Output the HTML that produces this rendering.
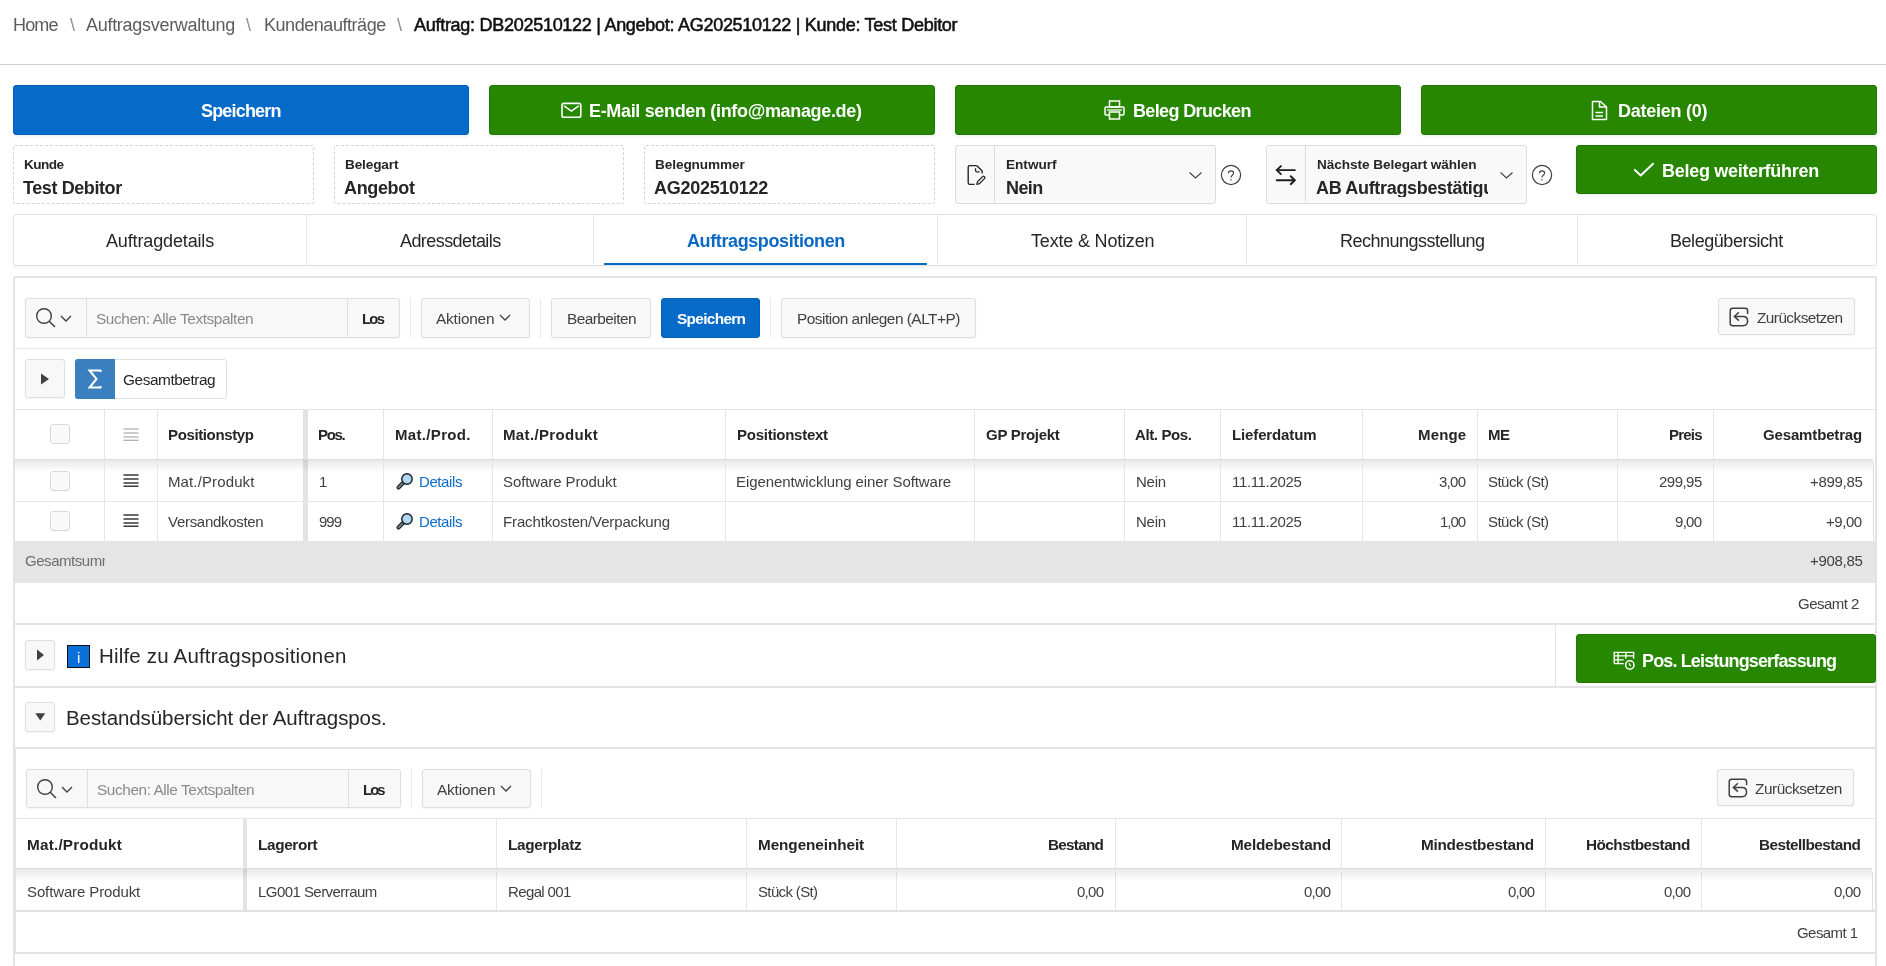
<!DOCTYPE html><html><head><meta charset="utf-8"><style>
html,body{margin:0;padding:0;background:#fff;}
body{width:1886px;height:966px;overflow:hidden;position:relative;font-family:"Liberation Sans",sans-serif;}
.t{position:absolute;white-space:nowrap;will-change:transform;}
.r{position:absolute;box-sizing:border-box;}
svg.r{overflow:visible;}
</style></head><body>
<div class="r" style="left:0px;top:64px;width:1886px;height:1px;background:#cfcfcf;"></div>
<div class="t" style="left:13.10px;top:16.00px;font-size:18.0px;line-height:18.0px;color:#5c5c5c;letter-spacing:-0.833px;">Home</div>
<div class="t" style="left:69.80px;top:16.00px;font-size:18.0px;line-height:18.0px;color:#8f8f8f;letter-spacing:0.000px;">\</div>
<div class="t" style="left:86.10px;top:16.00px;font-size:18.0px;line-height:18.0px;color:#5c5c5c;letter-spacing:-0.288px;">Auftragsverwaltung</div>
<div class="t" style="left:245.60px;top:16.00px;font-size:18.0px;line-height:18.0px;color:#8f8f8f;letter-spacing:0.000px;">\</div>
<div class="t" style="left:264.40px;top:16.00px;font-size:18.0px;line-height:18.0px;color:#5c5c5c;letter-spacing:-0.454px;">Kundenaufträge</div>
<div class="t" style="left:397.00px;top:16.00px;font-size:18.0px;line-height:18.0px;color:#8f8f8f;letter-spacing:0.000px;">\</div>
<div class="t" style="left:414.00px;top:16.00px;font-size:18.0px;line-height:18.0px;color:#111111;letter-spacing:-0.279px;-webkit-text-stroke:0.55px #111111;">Auftrag: DB202510122 | Angebot: AG202510122 | Kunde: Test Debitor</div>
<div class="r" style="left:13px;top:85px;width:456px;height:50px;background:#056ac8;border:1px solid #0460b8;border-radius:3px;box-shadow:0 2px 3px rgba(0,0,0,0.06);"></div>
<div class="t" style="left:200.80px;top:102.00px;font-size:18.0px;line-height:18.0px;color:#fff;letter-spacing:-0.819px;font-weight:bold;">Speichern</div>
<div class="r" style="left:489px;top:85px;width:446px;height:50px;background:#278701;border:1px solid #217a00;border-radius:3px;box-shadow:0 2px 3px rgba(0,0,0,0.06);"></div>
<svg class="r" style="left:561px;top:103px;" width="21" height="15" viewBox="0 0 21 15"><rect x="1" y="0.4" width="18.8" height="13.8" rx="1.8" fill="none" stroke="#fff" stroke-width="1.6"/><path d="M3 2.8 L10.4 8 L17.8 2.8" fill="none" stroke="#fff" stroke-width="1.5"/></svg>
<div class="t" style="left:589.40px;top:102.00px;font-size:18.0px;line-height:18.0px;color:#fff;letter-spacing:-0.334px;font-weight:bold;">E-Mail senden (info@manage.de)</div>
<div class="r" style="left:955px;top:85px;width:446px;height:50px;background:#278701;border:1px solid #217a00;border-radius:3px;box-shadow:0 2px 3px rgba(0,0,0,0.06);"></div>
<svg class="r" style="left:1104px;top:100px;" width="21" height="20" viewBox="0 0 21 20"><rect x="5.5" y="1" width="10" height="6" fill="none" stroke="#fff" stroke-width="1.5"/><path d="M5 15 H2 Q1 15 1 14 V8 Q1 7 2 7 H19 Q20 7 20 8 V14 Q20 15 19 15 H16" fill="none" stroke="#fff" stroke-width="1.5"/><rect x="5.5" y="12" width="10" height="7" fill="none" stroke="#fff" stroke-width="1.5"/><path d="M3 10 H18" stroke="#fff" stroke-width="1.3"/></svg>
<div class="t" style="left:1132.90px;top:102.00px;font-size:18.0px;line-height:18.0px;color:#fff;letter-spacing:-0.638px;font-weight:bold;">Beleg Drucken</div>
<div class="r" style="left:1421px;top:85px;width:456px;height:50px;background:#278701;border:1px solid #217a00;border-radius:3px;box-shadow:0 2px 3px rgba(0,0,0,0.06);"></div>
<svg class="r" style="left:1591px;top:100px;" width="17" height="21" viewBox="0 0 17 21"><path d="M1.5 1.5 H9.5 L15.5 7 V19.5 H1.5 Z" fill="none" stroke="#fff" stroke-width="1.5" stroke-linejoin="round"/><path d="M8.5 2 V7 H15" fill="none" stroke="#fff" stroke-width="1.5"/><path d="M4.5 12.5 H12 M4.5 16 H12" stroke="#fff" stroke-width="1.5"/></svg>
<div class="t" style="left:1618.20px;top:102.00px;font-size:18.0px;line-height:18.0px;color:#fff;letter-spacing:-0.250px;font-weight:bold;">Dateien (0)</div>
<div class="r" style="left:13px;top:145px;width:301px;height:59px;border:1px dashed #d2d2d2;border-radius:2px;"></div>
<div class="t" style="left:23.90px;top:158.00px;font-size:13.6px;line-height:13.6px;color:#262626;letter-spacing:-0.550px;font-weight:bold;">Kunde</div>
<div class="t" style="left:23.30px;top:179.00px;font-size:18.0px;line-height:18.0px;color:#262626;letter-spacing:-0.409px;font-weight:bold;">Test Debitor</div>
<div class="r" style="left:334px;top:145px;width:290px;height:59px;border:1px dashed #d2d2d2;border-radius:2px;"></div>
<div class="t" style="left:344.50px;top:158.00px;font-size:13.6px;line-height:13.6px;color:#262626;letter-spacing:-0.129px;font-weight:bold;">Belegart</div>
<div class="t" style="left:343.90px;top:179.00px;font-size:18.0px;line-height:18.0px;color:#262626;letter-spacing:-0.350px;font-weight:bold;">Angebot</div>
<div class="r" style="left:644px;top:145px;width:291px;height:59px;border:1px dashed #d2d2d2;border-radius:2px;"></div>
<div class="t" style="left:655.00px;top:158.00px;font-size:13.6px;line-height:13.6px;color:#262626;letter-spacing:-0.080px;font-weight:bold;">Belegnummer</div>
<div class="t" style="left:654.30px;top:179.00px;font-size:18.0px;line-height:18.0px;color:#262626;letter-spacing:-0.280px;font-weight:bold;">AG202510122</div>
<div class="r" style="left:955px;top:145px;width:261px;height:59px;background:#f9f9f9;border:1px solid #dcdcdc;border-radius:3px;"></div>
<div class="r" style="left:994px;top:146px;width:1px;height:57px;background:#dcdcdc;"></div>
<svg class="r" style="left:960px;top:160px;" width="32" height="30" viewBox="0 0 32 30"><path d="M16.6 5.6 H9.8 Q8.2 5.6 8.2 7.2 V22.8 Q8.2 24.4 9.8 24.4 H14.6" fill="none" stroke="#262626" stroke-width="1.4"/><path d="M16.6 5.6 L22.2 10.9 V13.4" fill="none" stroke="#262626" stroke-width="1.4" stroke-linejoin="round"/><path d="M15.5 8.2 V10.3 Q15.5 11.9 17.1 11.9 H19.6" fill="none" stroke="#262626" stroke-width="1.3"/><path d="M16.8 24.4 L17.56 21.65 L22.5 16.6 A1.4 1.4 0 0 1 24.5 18.6 L19.54 23.61 Z" fill="#e8e8e8" stroke="#262626" stroke-width="1.3" stroke-linejoin="round"/></svg>
<div class="t" style="left:1005.90px;top:158.00px;font-size:13.6px;line-height:13.6px;color:#262626;letter-spacing:-0.000px;font-weight:bold;">Entwurf</div>
<div class="t" style="left:1005.90px;top:179.00px;font-size:18.0px;line-height:18.0px;color:#262626;letter-spacing:-0.600px;font-weight:bold;">Nein</div>
<svg class="r" style="left:1189px;top:172px;" width="13" height="7" viewBox="0 0 13 7"><path d="M0.5 0.5 L6.5 6 L12.5 0.5" fill="none" stroke="#404040" stroke-width="1.1"/></svg>
<svg class="r" style="left:1220px;top:164px;" width="22" height="22" viewBox="0 0 22 22"><circle cx="11" cy="11" r="9.6" fill="none" stroke="#404040" stroke-width="1.2"/><path d="M8.4 9.3 Q8.4 6.8 11 6.8 Q13.6 6.8 13.6 9.1 Q13.6 10.6 12.1 11.4 Q11 12 11 13.6" fill="none" stroke="#404040" stroke-width="1.15"/><circle cx="11" cy="15.8" r="0.75" fill="#404040"/></svg>
<div class="r" style="left:1266px;top:145px;width:261px;height:59px;background:#f9f9f9;border:1px solid #dcdcdc;border-radius:3px;"></div>
<div class="r" style="left:1305px;top:146px;width:1px;height:57px;background:#dcdcdc;"></div>
<svg class="r" style="left:1270px;top:160px;" width="32" height="30" viewBox="0 0 32 30"><path d="M6.7 10.1 H24.9 M10.9 6.1 L6.7 10.1 L10.9 14.1 M24.9 20.2 H6.7 M20.7 16.2 L24.9 20.2 L20.7 24.2" fill="none" stroke="#1e1e1e" stroke-width="1.9" stroke-linecap="round" stroke-linejoin="round"/></svg>
<div class="t" style="left:1316.60px;top:158.00px;font-size:13.6px;line-height:13.6px;color:#262626;letter-spacing:-0.059px;font-weight:bold;">Nächste Belegart wählen</div>
<div class="t" style="left:1316.00px;top:179.00px;font-size:18.0px;line-height:18.0px;color:#262626;letter-spacing:-0.325px;font-weight:bold;width:171.50px;overflow:hidden;">AB Auftragsbestätigung</div>
<svg class="r" style="left:1500px;top:172px;" width="13" height="7" viewBox="0 0 13 7"><path d="M0.5 0.5 L6.5 6 L12.5 0.5" fill="none" stroke="#404040" stroke-width="1.1"/></svg>
<svg class="r" style="left:1530.5px;top:164px;" width="22" height="22" viewBox="0 0 22 22"><circle cx="11" cy="11" r="9.6" fill="none" stroke="#404040" stroke-width="1.2"/><path d="M8.4 9.3 Q8.4 6.8 11 6.8 Q13.6 6.8 13.6 9.1 Q13.6 10.6 12.1 11.4 Q11 12 11 13.6" fill="none" stroke="#404040" stroke-width="1.15"/><circle cx="11" cy="15.8" r="0.75" fill="#404040"/></svg>
<div class="r" style="left:1576px;top:145px;width:301px;height:49px;background:#278701;border:1px solid #217a00;border-radius:3px;box-shadow:0 2px 3px rgba(0,0,0,0.06);"></div>
<svg class="r" style="left:1626px;top:155px;" width="34" height="26" viewBox="0 0 34 26"><path d="M8.85 14.9 L14.75 20.5 L27 8.7" fill="none" stroke="#fff" stroke-width="2" stroke-linecap="round" stroke-linejoin="round"/></svg>
<div class="t" style="left:1661.60px;top:162.00px;font-size:18.0px;line-height:18.0px;color:#fff;letter-spacing:-0.285px;font-weight:bold;">Beleg weiterführen</div>
<div class="r" style="left:13px;top:214px;width:1864px;height:52px;background:#fff;border:1px solid #e2e2e2;border-radius:3px;box-shadow:0 2px 3px rgba(0,0,0,0.04);"></div>
<div class="r" style="left:306px;top:215px;width:1px;height:50px;background:#e6e6e6;"></div>
<div class="r" style="left:593px;top:215px;width:1px;height:50px;background:#e6e6e6;"></div>
<div class="r" style="left:937px;top:215px;width:1px;height:50px;background:#e6e6e6;"></div>
<div class="r" style="left:1246px;top:215px;width:1px;height:50px;background:#e6e6e6;"></div>
<div class="r" style="left:1577px;top:215px;width:1px;height:50px;background:#e6e6e6;"></div>
<div class="t" style="left:106.00px;top:232.00px;font-size:18.0px;line-height:18.0px;color:#262626;letter-spacing:-0.142px;">Auftragdetails</div>
<div class="t" style="left:399.80px;top:232.00px;font-size:18.0px;line-height:18.0px;color:#262626;letter-spacing:-0.571px;">Adressdetails</div>
<div class="t" style="left:686.90px;top:232.00px;font-size:18.0px;line-height:18.0px;color:#0b68c4;letter-spacing:-0.394px;font-weight:bold;">Auftragspositionen</div>
<div class="t" style="left:1030.50px;top:232.00px;font-size:18.0px;line-height:18.0px;color:#262626;letter-spacing:-0.182px;">Texte &amp; Notizen</div>
<div class="t" style="left:1339.60px;top:232.00px;font-size:18.0px;line-height:18.0px;color:#262626;letter-spacing:-0.500px;">Rechnungsstellung</div>
<div class="t" style="left:1670.30px;top:232.00px;font-size:18.0px;line-height:18.0px;color:#262626;letter-spacing:-0.454px;">Belegübersicht</div>
<div class="r" style="left:604px;top:263px;width:323px;height:2px;background:#056ac8;"></div>
<div class="r" style="left:13px;top:276px;width:1864px;height:724px;background:#fff;border:2px solid #e3e3e3;border-radius:3px;"></div>
<div class="r" style="left:13px;top:276px;width:1864px;height:349px;border:2px solid #e3e3e3;border-radius:3px;"></div>
<div class="r" style="left:25px;top:298px;width:375px;height:40px;background:#f8f8f8;border:1px solid #dedede;border-radius:3px;box-shadow:0 1px 2px rgba(0,0,0,0.05);"></div>
<div class="r" style="left:86px;top:299px;width:1px;height:38px;background:#dedede;"></div>
<div class="r" style="left:347px;top:299px;width:1px;height:38px;background:#dedede;"></div>
<svg class="r" style="left:35px;top:308px;" width="24" height="22" viewBox="0 0 24 22"><circle cx="9" cy="8" r="7.3" fill="none" stroke="#404040" stroke-width="1.4"/><path d="M14.2 13.2 L20 19" stroke="#404040" stroke-width="1.5"/></svg>
<svg class="r" style="left:60px;top:315px;" width="13" height="8" viewBox="0 0 13 8"><path d="M1 1 L6 6 L11 1" fill="none" stroke="#404040" stroke-width="1.4"/></svg>
<div class="t" style="left:95.80px;top:311.00px;font-size:15.4px;line-height:15.4px;color:#8a8a8a;letter-spacing:-0.426px;">Suchen: Alle Textspalten</div>
<div class="t" style="left:362.30px;top:312.00px;font-size:14.8px;line-height:14.8px;color:#262626;letter-spacing:-1.700px;font-weight:bold;">Los</div>
<div class="r" style="left:410px;top:298px;width:1px;height:40px;background:#e8e8e8;"></div>
<div class="r" style="left:421px;top:298px;width:109px;height:40px;background:#f8f8f8;border:1px solid #dedede;border-radius:3px;box-shadow:0 1px 2px rgba(0,0,0,0.05);"></div>
<div class="t" style="left:436.40px;top:311.00px;font-size:15.4px;line-height:15.4px;color:#404040;letter-spacing:-0.193px;">Aktionen</div>
<svg class="r" style="left:498.5px;top:314px;" width="13" height="8" viewBox="0 0 13 8"><path d="M1 1 L6 6 L11 1" fill="none" stroke="#404040" stroke-width="1.3"/></svg>
<div class="r" style="left:540px;top:298px;width:1px;height:40px;background:#e8e8e8;"></div>
<div class="r" style="left:551px;top:298px;width:100px;height:40px;background:#f8f8f8;border:1px solid #dedede;border-radius:3px;box-shadow:0 1px 2px rgba(0,0,0,0.05);"></div>
<div class="t" style="left:566.50px;top:311.00px;font-size:15.4px;line-height:15.4px;color:#404040;letter-spacing:-0.544px;">Bearbeiten</div>
<div class="r" style="left:661px;top:298px;width:99px;height:40px;background:#056ac8;border:1px solid #0460b8;border-radius:3px;"></div>
<div class="t" style="left:676.50px;top:311.00px;font-size:15.4px;line-height:15.4px;color:#fff;letter-spacing:-0.681px;font-weight:bold;">Speichern</div>
<div class="r" style="left:770px;top:298px;width:1px;height:40px;background:#e8e8e8;"></div>
<div class="r" style="left:781px;top:298px;width:195px;height:40px;background:#f8f8f8;border:1px solid #dedede;border-radius:3px;box-shadow:0 1px 2px rgba(0,0,0,0.05);"></div>
<div class="t" style="left:796.90px;top:311.00px;font-size:15.4px;line-height:15.4px;color:#404040;letter-spacing:-0.491px;">Position anlegen (ALT+P)</div>
<div class="r" style="left:1718px;top:298px;width:137px;height:37px;background:#f8f8f8;border:1px solid #dedede;border-radius:3px;box-shadow:0 1px 2px rgba(0,0,0,0.05);"></div>
<svg class="r" style="left:1729px;top:307px;" width="20" height="20" viewBox="0 0 20 20"><path d="M18.6 6.9 V3.8 Q18.6 1.3 16.1 1.3 H3.7 Q1.2 1.3 1.2 3.8 V16.2 Q1.2 18.7 3.7 18.7 H14 Q18.6 18.7 18.6 14 Q18.6 9.4 14 9.4 H5.2" fill="none" stroke="#404040" stroke-width="1.5"/><path d="M9.9 5.2 L5.4 9.4 L9.9 13.6" fill="none" stroke="#404040" stroke-width="1.5"/></svg>
<div class="t" style="left:1757.00px;top:310.00px;font-size:15.4px;line-height:15.4px;color:#404040;letter-spacing:-0.568px;">Zurücksetzen</div>
<div class="r" style="left:15px;top:348px;width:1860px;height:1px;background:#e6e6e6;"></div>
<div class="r" style="left:25px;top:359px;width:40px;height:39px;background:#f8f8f8;border:1px solid #dedede;border-radius:3px;box-shadow:0 1px 2px rgba(0,0,0,0.05);"></div>
<svg class="r" style="left:40px;top:373px;" width="10" height="12" viewBox="0 0 10 12"><path d="M1 0.5 L9 6 L1 11.5 Z" fill="#404040"/></svg>
<div class="r" style="left:75px;top:359px;width:152px;height:40px;background:#fff;border:1px solid #dedede;border-radius:3px;"></div>
<div class="r" style="left:75px;top:359px;width:40px;height:40px;background:#3a7fbf;border-radius:3px 0 0 3px;"></div>
<svg class="r" style="left:86.5px;top:369px;" width="18" height="20" viewBox="0 0 18 20"><path d="M13.5 3 V1.5 H2.5 L9.5 10 L2.5 18.5 H13.5 V17" fill="none" stroke="#fff" stroke-width="2" stroke-linejoin="miter"/></svg>
<div class="t" style="left:123.40px;top:372.00px;font-size:15.4px;line-height:15.4px;color:#262626;letter-spacing:-0.445px;">Gesamtbetrag</div>
<div class="r" style="left:15px;top:409px;width:1860px;height:1px;background:#e6e6e6;"></div>
<div class="r" style="left:104px;top:410px;width:1px;height:49px;background:#e6e6e6;"></div>
<div class="r" style="left:157px;top:410px;width:1px;height:49px;background:#e6e6e6;"></div>
<div class="r" style="left:383px;top:410px;width:1px;height:49px;background:#e6e6e6;"></div>
<div class="r" style="left:492px;top:410px;width:1px;height:49px;background:#e6e6e6;"></div>
<div class="r" style="left:725px;top:410px;width:1px;height:49px;background:#e6e6e6;"></div>
<div class="r" style="left:974px;top:410px;width:1px;height:49px;background:#e6e6e6;"></div>
<div class="r" style="left:1124px;top:410px;width:1px;height:49px;background:#e6e6e6;"></div>
<div class="r" style="left:1220px;top:410px;width:1px;height:49px;background:#e6e6e6;"></div>
<div class="r" style="left:1362px;top:410px;width:1px;height:49px;background:#e6e6e6;"></div>
<div class="r" style="left:1477px;top:410px;width:1px;height:49px;background:#e6e6e6;"></div>
<div class="r" style="left:1617px;top:410px;width:1px;height:49px;background:#e6e6e6;"></div>
<div class="r" style="left:1713px;top:410px;width:1px;height:49px;background:#e6e6e6;"></div>
<div class="r" style="left:303px;top:410px;width:5px;height:131px;background:#e3e3e3;"></div>
<div class="r" style="left:15px;top:459px;width:1858px;height:1px;background:#dcdcdc;"></div>
<div class="r" style="left:15px;top:460px;width:1858px;height:12px;background:linear-gradient(rgba(0,0,0,0.09),rgba(0,0,0,0));"></div>
<div class="r" style="left:104px;top:462px;width:1px;height:79px;background:#e6e6e6;"></div>
<div class="r" style="left:157px;top:462px;width:1px;height:79px;background:#e6e6e6;"></div>
<div class="r" style="left:383px;top:462px;width:1px;height:79px;background:#e6e6e6;"></div>
<div class="r" style="left:492px;top:462px;width:1px;height:79px;background:#e6e6e6;"></div>
<div class="r" style="left:725px;top:462px;width:1px;height:79px;background:#e6e6e6;"></div>
<div class="r" style="left:974px;top:462px;width:1px;height:79px;background:#e6e6e6;"></div>
<div class="r" style="left:1124px;top:462px;width:1px;height:79px;background:#e6e6e6;"></div>
<div class="r" style="left:1220px;top:462px;width:1px;height:79px;background:#e6e6e6;"></div>
<div class="r" style="left:1362px;top:462px;width:1px;height:79px;background:#e6e6e6;"></div>
<div class="r" style="left:1477px;top:462px;width:1px;height:79px;background:#e6e6e6;"></div>
<div class="r" style="left:1617px;top:462px;width:1px;height:79px;background:#e6e6e6;"></div>
<div class="r" style="left:1713px;top:462px;width:1px;height:79px;background:#e6e6e6;"></div>
<div class="r" style="left:15px;top:501px;width:1858px;height:1px;background:#e6e6e6;"></div>
<div class="r" style="left:1873px;top:462px;width:1px;height:79px;background:#e0e0e0;"></div>
<div class="r" style="left:50px;top:424px;width:20px;height:20px;background:#f9f9f9;border:1px solid #d9d9d9;border-radius:3px;"></div>
<svg class="r" style="left:122.5px;top:427.5px;" width="16" height="14" viewBox="0 0 16 14"><path d="M0.5 1 H15.5 M0.5 5 H15.5 M0.5 9 H15.5 M0.5 12.3 H15.5" stroke="#9a9a9a" stroke-width="1.1"/></svg>
<div class="t" style="left:168.30px;top:427.00px;font-size:15.0px;line-height:15.0px;color:#262626;letter-spacing:-0.373px;font-weight:bold;">Positionstyp</div>
<div class="t" style="left:318.00px;top:427.00px;font-size:15.0px;line-height:15.0px;color:#262626;letter-spacing:-1.367px;font-weight:bold;">Pos.</div>
<div class="t" style="left:394.50px;top:427.00px;font-size:15.0px;line-height:15.0px;color:#262626;letter-spacing:0.333px;font-weight:bold;">Mat./Prod.</div>
<div class="t" style="left:503.30px;top:427.00px;font-size:15.0px;line-height:15.0px;color:#262626;letter-spacing:0.350px;font-weight:bold;">Mat./Produkt</div>
<div class="t" style="left:736.90px;top:427.00px;font-size:15.0px;line-height:15.0px;color:#262626;letter-spacing:-0.258px;font-weight:bold;">Positionstext</div>
<div class="t" style="left:985.50px;top:427.00px;font-size:15.0px;line-height:15.0px;color:#262626;letter-spacing:-0.289px;font-weight:bold;">GP Projekt</div>
<div class="t" style="left:1135.10px;top:427.00px;font-size:15.0px;line-height:15.0px;color:#262626;letter-spacing:-0.375px;font-weight:bold;">Alt. Pos.</div>
<div class="t" style="left:1231.80px;top:427.00px;font-size:15.0px;line-height:15.0px;color:#262626;letter-spacing:-0.135px;font-weight:bold;">Lieferdatum</div>
<div class="t" style="left:1418.00px;top:427.00px;font-size:15.0px;line-height:15.0px;color:#262626;letter-spacing:0.175px;font-weight:bold;">Menge</div>
<div class="t" style="left:1487.60px;top:427.00px;font-size:15.0px;line-height:15.0px;color:#262626;letter-spacing:-0.600px;font-weight:bold;">ME</div>
<div class="t" style="left:1669.30px;top:427.00px;font-size:15.0px;line-height:15.0px;color:#262626;letter-spacing:-0.800px;font-weight:bold;">Preis</div>
<div class="t" style="left:1763.30px;top:427.00px;font-size:15.0px;line-height:15.0px;color:#262626;letter-spacing:-0.150px;font-weight:bold;">Gesamtbetrag</div>
<div class="r" style="left:50px;top:471px;width:20px;height:20px;background:#f9f9f9;border:1px solid #d9d9d9;border-radius:3px;"></div>
<svg class="r" style="left:122.5px;top:474.3px;" width="16" height="14" viewBox="0 0 16 14"><path d="M0.5 1 H15.5 M0.5 5 H15.5 M0.5 9 H15.5 M0.5 12.3 H15.5" stroke="#3a3a3a" stroke-width="1.4"/></svg>
<div class="t" style="left:168.30px;top:474.00px;font-size:15.0px;line-height:15.0px;color:#404040;letter-spacing:0.123px;">Mat./Produkt</div>
<div class="t" style="left:318.50px;top:474.00px;font-size:15.0px;line-height:15.0px;color:#404040;letter-spacing:0.000px;">1</div>
<div class="t" style="left:502.90px;top:474.00px;font-size:15.0px;line-height:15.0px;color:#404040;letter-spacing:-0.097px;">Software Produkt</div>
<div class="t" style="left:736.40px;top:474.00px;font-size:15.0px;line-height:15.0px;color:#404040;letter-spacing:-0.083px;">Eigenentwicklung einer Software</div>
<div class="t" style="left:1439.20px;top:474.00px;font-size:15.0px;line-height:15.0px;color:#404040;letter-spacing:-0.733px;">3,00</div>
<div class="t" style="left:1659.00px;top:474.00px;font-size:15.0px;line-height:15.0px;color:#404040;letter-spacing:-0.520px;">299,95</div>
<div class="t" style="left:1809.70px;top:474.00px;font-size:15.0px;line-height:15.0px;color:#404040;letter-spacing:-0.308px;">+899,85</div>
<svg class="r" style="left:395.5px;top:471.8px;" width="18" height="18" viewBox="0 0 18 18"><path d="M2.5 15.5 L7.5 10.5" stroke="#1a1a1a" stroke-width="4" stroke-linecap="round"/><path d="M2.5 15.5 L7.5 10.5" stroke="#6d7f86" stroke-width="1.8" stroke-linecap="round"/><circle cx="11" cy="7" r="5.2" fill="#a9d4f4" stroke="#1a1a1a" stroke-width="1.4"/><path d="M9 5.5 L12.5 9" stroke="#d6ecfb" stroke-width="1"/></svg>
<div class="t" style="left:419.40px;top:474.00px;font-size:15.0px;line-height:15.0px;color:#0a6bc9;letter-spacing:-0.408px;">Details</div>
<div class="t" style="left:1135.60px;top:474.00px;font-size:15.0px;line-height:15.0px;color:#404040;letter-spacing:-0.250px;">Nein</div>
<div class="t" style="left:1231.80px;top:474.00px;font-size:15.0px;line-height:15.0px;color:#404040;letter-spacing:-0.339px;">11.11.2025</div>
<div class="t" style="left:1487.60px;top:474.00px;font-size:15.0px;line-height:15.0px;color:#404040;letter-spacing:-0.528px;">Stück (St)</div>
<div class="r" style="left:50px;top:511px;width:20px;height:20px;background:#f9f9f9;border:1px solid #d9d9d9;border-radius:3px;"></div>
<svg class="r" style="left:122.5px;top:514.4px;" width="16" height="14" viewBox="0 0 16 14"><path d="M0.5 1 H15.5 M0.5 5 H15.5 M0.5 9 H15.5 M0.5 12.3 H15.5" stroke="#3a3a3a" stroke-width="1.4"/></svg>
<div class="t" style="left:168.30px;top:514.00px;font-size:15.0px;line-height:15.0px;color:#404040;letter-spacing:-0.296px;">Versandkosten</div>
<div class="t" style="left:318.50px;top:514.00px;font-size:15.0px;line-height:15.0px;color:#404040;letter-spacing:-1.025px;">999</div>
<div class="t" style="left:503.30px;top:514.00px;font-size:15.0px;line-height:15.0px;color:#404040;letter-spacing:-0.136px;">Frachtkosten/Verpackung</div>
<div class="t" style="left:1440.00px;top:514.00px;font-size:15.0px;line-height:15.0px;color:#404040;letter-spacing:-1.000px;">1,00</div>
<div class="t" style="left:1675.20px;top:514.00px;font-size:15.0px;line-height:15.0px;color:#404040;letter-spacing:-0.700px;">9,00</div>
<div class="t" style="left:1826.40px;top:514.00px;font-size:15.0px;line-height:15.0px;color:#404040;letter-spacing:-0.463px;">+9,00</div>
<svg class="r" style="left:395.5px;top:511.9px;" width="18" height="18" viewBox="0 0 18 18"><path d="M2.5 15.5 L7.5 10.5" stroke="#1a1a1a" stroke-width="4" stroke-linecap="round"/><path d="M2.5 15.5 L7.5 10.5" stroke="#6d7f86" stroke-width="1.8" stroke-linecap="round"/><circle cx="11" cy="7" r="5.2" fill="#a9d4f4" stroke="#1a1a1a" stroke-width="1.4"/><path d="M9 5.5 L12.5 9" stroke="#d6ecfb" stroke-width="1"/></svg>
<div class="t" style="left:419.40px;top:514.00px;font-size:15.0px;line-height:15.0px;color:#0a6bc9;letter-spacing:-0.408px;">Details</div>
<div class="t" style="left:1135.60px;top:514.00px;font-size:15.0px;line-height:15.0px;color:#404040;letter-spacing:-0.250px;">Nein</div>
<div class="t" style="left:1231.80px;top:514.00px;font-size:15.0px;line-height:15.0px;color:#404040;letter-spacing:-0.339px;">11.11.2025</div>
<div class="t" style="left:1487.60px;top:514.00px;font-size:15.0px;line-height:15.0px;color:#404040;letter-spacing:-0.528px;">Stück (St)</div>
<div class="r" style="left:15px;top:541px;width:1860px;height:42px;background:#e5e5e5;"></div>
<div class="t" style="left:25.30px;top:553.00px;font-size:15.0px;line-height:15.0px;color:#6e6e6e;letter-spacing:-0.456px;width:79.70px;overflow:hidden;">Gesamtsumme</div>
<div class="t" style="left:1809.70px;top:553.00px;font-size:15.0px;line-height:15.0px;color:#404040;letter-spacing:-0.308px;">+908,85</div>
<div class="t" style="left:1798.10px;top:596.00px;font-size:15.0px;line-height:15.0px;color:#404040;letter-spacing:-0.529px;">Gesamt 2</div>
<div class="r" style="left:13px;top:623px;width:1543px;height:64px;border:1px solid #e3e3e3;border-radius:3px;"></div>
<div class="r" style="left:25px;top:640px;width:30px;height:30px;background:#f8f8f8;border:1px solid #dedede;border-radius:3px;box-shadow:0 1px 2px rgba(0,0,0,0.05);"></div>
<svg class="r" style="left:36px;top:649px;" width="9" height="12" viewBox="0 0 9 12"><path d="M1 0.5 L8 6 L1 11.5 Z" fill="#404040"/></svg>
<div class="r" style="left:67px;top:645px;width:23px;height:23px;background:#0a6fd6;border:1.5px solid #111;"></div>
<div class="t" style="left:76.80px;top:650.00px;font-size:15.0px;line-height:15.0px;color:#fff;letter-spacing:0.000px;">i</div>
<div class="t" style="left:98.60px;top:646.00px;font-size:20.5px;line-height:20.5px;color:#262626;letter-spacing:0.181px;">Hilfe zu Auftragspositionen</div>
<div class="r" style="left:1576px;top:634px;width:300px;height:49px;background:#278701;border:1px solid #217a00;border-radius:3px;"></div>
<svg class="r" style="left:1606px;top:645px;" width="34" height="30" viewBox="0 0 34 30"><path d="M8.2 18.6 V7.3 H27.6 V13.7 M8.2 10.9 H27.6 M8.2 14.9 H17.7 M8.2 18.6 H17.7 M12.1 7.3 V18.6 M19.9 7.3 V13.7" fill="none" stroke="#fff" stroke-width="1.35"/><circle cx="23.8" cy="20" r="4.2" fill="#278701" stroke="#fff" stroke-width="1.5"/><path d="M23.1 18.2 L24.6 21.2" stroke="#fff" stroke-width="1.3"/></svg>
<div class="t" style="left:1642.20px;top:652.00px;font-size:18.0px;line-height:18.0px;color:#fff;letter-spacing:-0.861px;font-weight:bold;">Pos. Leistungserfassung</div>
<div class="r" style="left:13px;top:686px;width:1864px;height:2px;background:#e3e3e3;"></div>
<div class="r" style="left:25px;top:702px;width:30px;height:30px;background:#f8f8f8;border:1px solid #dedede;border-radius:3px;box-shadow:0 1px 2px rgba(0,0,0,0.05);"></div>
<svg class="r" style="left:35px;top:713px;" width="11" height="8" viewBox="0 0 11 8"><path d="M0.3 0.3 L10.3 0.3 L5.3 7.6 Z" fill="#404040"/></svg>
<div class="t" style="left:65.70px;top:708.00px;font-size:20.5px;line-height:20.5px;color:#262626;letter-spacing:-0.086px;">Bestandsübersicht der Auftragspos.</div>
<div class="r" style="left:13px;top:747px;width:1864px;height:2px;background:#e3e3e3;"></div>
<div class="r" style="left:14px;top:747px;width:1863px;height:207px;border:2px solid #e3e3e3;border-radius:2px;"></div>
<div class="r" style="left:26px;top:769px;width:375px;height:39px;background:#f8f8f8;border:1px solid #dedede;border-radius:3px;box-shadow:0 1px 2px rgba(0,0,0,0.05);"></div>
<div class="r" style="left:87px;top:770px;width:1px;height:37px;background:#dedede;"></div>
<div class="r" style="left:348px;top:770px;width:1px;height:37px;background:#dedede;"></div>
<svg class="r" style="left:36px;top:779px;" width="24" height="22" viewBox="0 0 24 22"><circle cx="9" cy="8" r="7.3" fill="none" stroke="#404040" stroke-width="1.4"/><path d="M14.2 13.2 L20 19" stroke="#404040" stroke-width="1.5"/></svg>
<svg class="r" style="left:61px;top:786px;" width="13" height="8" viewBox="0 0 13 8"><path d="M1 1 L6 6 L11 1" fill="none" stroke="#404040" stroke-width="1.4"/></svg>
<div class="t" style="left:96.80px;top:782.00px;font-size:15.4px;line-height:15.4px;color:#8a8a8a;letter-spacing:-0.426px;">Suchen: Alle Textspalten</div>
<div class="t" style="left:363.20px;top:783.00px;font-size:14.8px;line-height:14.8px;color:#262626;letter-spacing:-1.900px;font-weight:bold;">Los</div>
<div class="r" style="left:411px;top:769px;width:1px;height:39px;background:#e8e8e8;"></div>
<div class="r" style="left:422px;top:769px;width:109px;height:39px;background:#f8f8f8;border:1px solid #dedede;border-radius:3px;box-shadow:0 1px 2px rgba(0,0,0,0.05);"></div>
<div class="t" style="left:436.90px;top:782.00px;font-size:15.4px;line-height:15.4px;color:#404040;letter-spacing:-0.193px;">Aktionen</div>
<svg class="r" style="left:499.5px;top:785px;" width="13" height="8" viewBox="0 0 13 8"><path d="M1 1 L6 6 L11 1" fill="none" stroke="#404040" stroke-width="1.3"/></svg>
<div class="r" style="left:541px;top:769px;width:1px;height:39px;background:#e8e8e8;"></div>
<div class="r" style="left:1717px;top:769px;width:137px;height:37px;background:#f8f8f8;border:1px solid #dedede;border-radius:3px;box-shadow:0 1px 2px rgba(0,0,0,0.05);"></div>
<svg class="r" style="left:1728px;top:778px;" width="20" height="20" viewBox="0 0 20 20"><path d="M18.6 6.9 V3.8 Q18.6 1.3 16.1 1.3 H3.7 Q1.2 1.3 1.2 3.8 V16.2 Q1.2 18.7 3.7 18.7 H14 Q18.6 18.7 18.6 14 Q18.6 9.4 14 9.4 H5.2" fill="none" stroke="#404040" stroke-width="1.5"/><path d="M9.9 5.2 L5.4 9.4 L9.9 13.6" fill="none" stroke="#404040" stroke-width="1.5"/></svg>
<div class="t" style="left:1754.80px;top:781.00px;font-size:15.4px;line-height:15.4px;color:#404040;letter-spacing:-0.459px;">Zurücksetzen</div>
<div class="r" style="left:16px;top:818px;width:1859px;height:1px;background:#e6e6e6;"></div>
<div class="r" style="left:496px;top:819px;width:1px;height:49px;background:#e6e6e6;"></div>
<div class="r" style="left:496px;top:872px;width:1px;height:39px;background:#e6e6e6;"></div>
<div class="r" style="left:746px;top:819px;width:1px;height:49px;background:#e6e6e6;"></div>
<div class="r" style="left:746px;top:872px;width:1px;height:39px;background:#e6e6e6;"></div>
<div class="r" style="left:896px;top:819px;width:1px;height:49px;background:#e6e6e6;"></div>
<div class="r" style="left:896px;top:872px;width:1px;height:39px;background:#e6e6e6;"></div>
<div class="r" style="left:1115px;top:819px;width:1px;height:49px;background:#e6e6e6;"></div>
<div class="r" style="left:1115px;top:872px;width:1px;height:39px;background:#e6e6e6;"></div>
<div class="r" style="left:1341px;top:819px;width:1px;height:49px;background:#e6e6e6;"></div>
<div class="r" style="left:1341px;top:872px;width:1px;height:39px;background:#e6e6e6;"></div>
<div class="r" style="left:1545px;top:819px;width:1px;height:49px;background:#e6e6e6;"></div>
<div class="r" style="left:1545px;top:872px;width:1px;height:39px;background:#e6e6e6;"></div>
<div class="r" style="left:1701px;top:819px;width:1px;height:49px;background:#e6e6e6;"></div>
<div class="r" style="left:1701px;top:872px;width:1px;height:39px;background:#e6e6e6;"></div>
<div class="r" style="left:243px;top:819px;width:4px;height:92px;background:#e3e3e3;"></div>
<div class="r" style="left:16px;top:868px;width:1856px;height:1px;background:#dcdcdc;"></div>
<div class="r" style="left:16px;top:869px;width:1856px;height:12px;background:linear-gradient(rgba(0,0,0,0.09),rgba(0,0,0,0));"></div>
<div class="r" style="left:1872px;top:872px;width:1px;height:39px;background:#e0e0e0;"></div>
<div class="t" style="left:26.50px;top:837.00px;font-size:15.3px;line-height:15.3px;color:#262626;letter-spacing:0.205px;font-weight:bold;">Mat./Produkt</div>
<div class="t" style="left:257.70px;top:837.00px;font-size:15.3px;line-height:15.3px;color:#262626;letter-spacing:-0.350px;font-weight:bold;">Lagerort</div>
<div class="t" style="left:507.60px;top:837.00px;font-size:15.3px;line-height:15.3px;color:#262626;letter-spacing:-0.322px;font-weight:bold;">Lagerplatz</div>
<div class="t" style="left:757.60px;top:837.00px;font-size:15.3px;line-height:15.3px;color:#262626;letter-spacing:-0.075px;font-weight:bold;">Mengeneinheit</div>
<div class="t" style="left:1048.40px;top:837.00px;font-size:15.3px;line-height:15.3px;color:#262626;letter-spacing:-0.742px;font-weight:bold;">Bestand</div>
<div class="t" style="left:1231.10px;top:837.00px;font-size:15.3px;line-height:15.3px;color:#262626;letter-spacing:-0.182px;font-weight:bold;">Meldebestand</div>
<div class="t" style="left:1421.30px;top:837.00px;font-size:15.3px;line-height:15.3px;color:#262626;letter-spacing:-0.250px;font-weight:bold;">Mindestbestand</div>
<div class="t" style="left:1586.20px;top:837.00px;font-size:15.3px;line-height:15.3px;color:#262626;letter-spacing:-0.517px;font-weight:bold;">Höchstbestand</div>
<div class="t" style="left:1758.60px;top:837.00px;font-size:15.3px;line-height:15.3px;color:#262626;letter-spacing:-0.535px;font-weight:bold;">Bestellbestand</div>
<div class="t" style="left:26.50px;top:884.00px;font-size:15.0px;line-height:15.0px;color:#404040;letter-spacing:-0.123px;">Software Produkt</div>
<div class="t" style="left:257.70px;top:884.00px;font-size:15.0px;line-height:15.0px;color:#404040;letter-spacing:-0.550px;">LG001 Serverraum</div>
<div class="t" style="left:507.60px;top:884.00px;font-size:15.0px;line-height:15.0px;color:#404040;letter-spacing:-0.625px;">Regal 001</div>
<div class="t" style="left:757.60px;top:884.00px;font-size:15.0px;line-height:15.0px;color:#404040;letter-spacing:-0.639px;">Stück (St)</div>
<div class="t" style="left:1077.30px;top:884.00px;font-size:15.0px;line-height:15.0px;color:#404040;letter-spacing:-0.733px;">0,00</div>
<div class="t" style="left:1304.10px;top:884.00px;font-size:15.0px;line-height:15.0px;color:#404040;letter-spacing:-0.733px;">0,00</div>
<div class="t" style="left:1507.50px;top:884.00px;font-size:15.0px;line-height:15.0px;color:#404040;letter-spacing:-0.733px;">0,00</div>
<div class="t" style="left:1663.50px;top:884.00px;font-size:15.0px;line-height:15.0px;color:#404040;letter-spacing:-0.733px;">0,00</div>
<div class="t" style="left:1833.50px;top:884.00px;font-size:15.0px;line-height:15.0px;color:#404040;letter-spacing:-0.733px;">0,00</div>
<div class="r" style="left:16px;top:910px;width:1859px;height:2px;background:#e0e0e0;"></div>
<div class="t" style="left:1797.00px;top:925.00px;font-size:15.0px;line-height:15.0px;color:#404040;letter-spacing:-0.557px;">Gesamt 1</div>
</body></html>
